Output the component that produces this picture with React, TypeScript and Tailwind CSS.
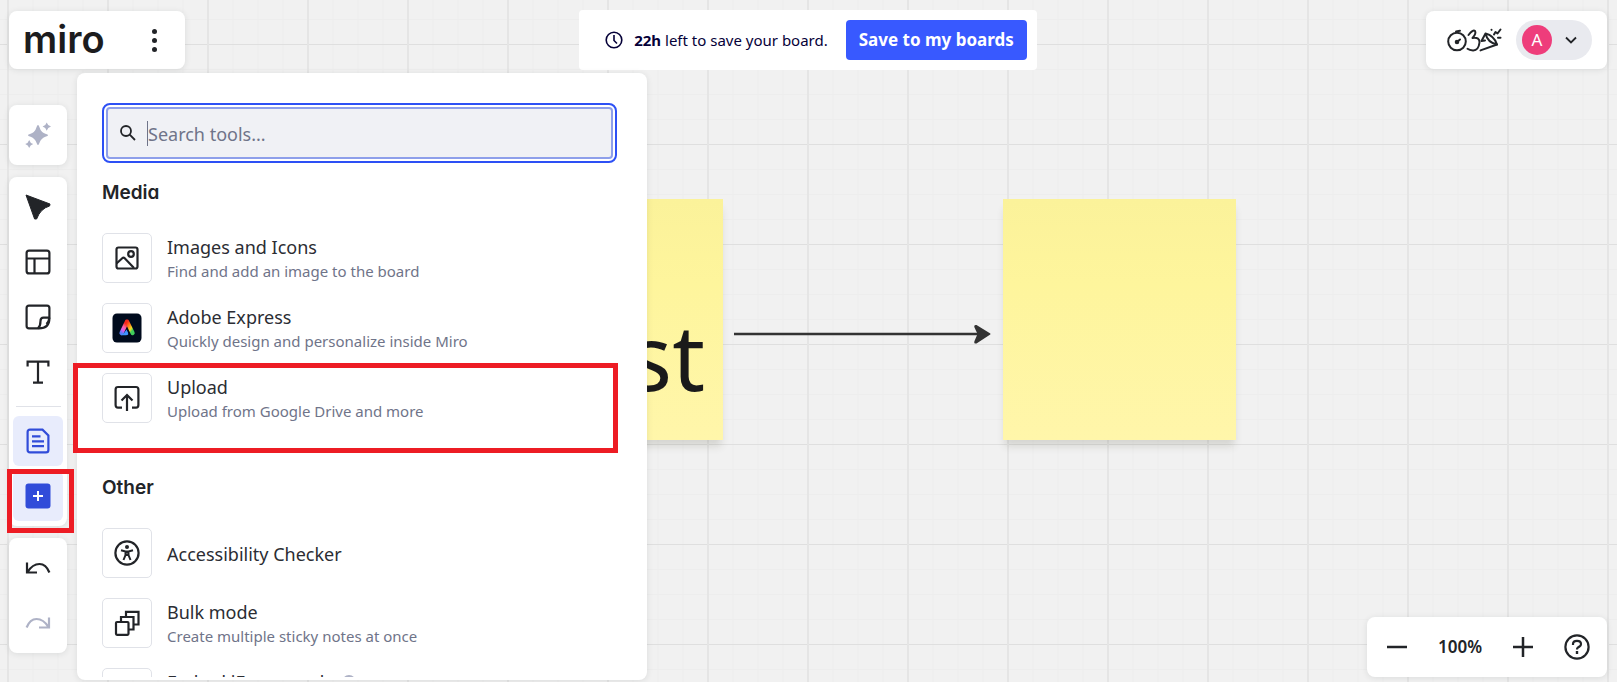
import React, { useState } from "react";

const tileButton = "flex size-[50px] items-center justify-center rounded-md";
const card = "rounded-lg bg-white shadow-[0_1px_6px_rgba(34,36,40,0.10)]";

interface IconProps {
    size?: number;
    children: React.ReactNode;
}

// 26x26 stroke icon used all over the toolbars
function Icon({ size = 26, children }: IconProps) {
    return (
        <svg
            width={size}
            height={size}
            viewBox="0 0 26 26"
            fill="none"
            stroke="currentColor"
            strokeWidth="2.2"
            aria-hidden="true"
        >
            {children}
        </svg>
    );
}

const SparkleIcon = () => (
    <Icon>
        <g fill="currentColor" stroke="none">
            <path d="M13 3 Q13.8 3 14.4 5 Q16 10.600 21 12 Q23 12.600 23 13.300 Q23 14 21 14.500 Q16 16 14.400 21 Q13.800 23 13 23 Q12.200 23 11.600 21 Q10 16 5 14.500 Q3 14 3 13.300 Q3 12.600 5 12 Q10 10.600 11.600 5 Q12.200 3 13 3Z" />
            <path d="M21.700 0.500 Q22.600 3.700 26 4.600 Q22.600 5.500 21.700 8.700 Q20.800 5.500 17.600 4.600 Q20.800 3.700 21.700 0.500Z" />
            <path d="M4.200 18 Q5.100 21.100 8.200 22 Q5.100 22.900 4.200 26 Q3.300 22.900 0.200 22 Q3.300 21.100 4.200 18Z" />
        </g>
    </Icon>
);

const CursorIcon = () => (
    <Icon>
        <path d="M1 1 L25 10 L24.600 12 Q15.500 14.500 11.600 25 L9.600 25 Z" fill="currentColor" stroke="currentColor" strokeWidth="1" strokeLinejoin="round" />
    </Icon>
);

const TemplateIcon = () => (
    <Icon>
        <rect x="1.600" y="1.600" width="22.800" height="22.800" rx="2.500" />
        <path d="M1.600 9.500H24.400M9.500 9.500V24.400" />
    </Icon>
);

const StickyIcon = () => (
    <Icon>
        <path d="M4 1.600H22Q24.400 1.600 24.400 4V14Q24.400 24.400 14 24.400H4Q1.600 24.400 1.600 22V4Q1.600 1.600 4 1.600Z" />
        <path d="M24.400 13.600H18.500Q15.500 13.600 15.500 17Q15.500 22 13 24.400M21.500 20Q24 17.500 24.400 13.600" />
    </Icon>
);

const TextIcon = () => (
    <Icon>
        <path d="M2.600 7.500V2.600H23.400V7.500M13 2.600V23.400M8 23.600H18" />
    </Icon>
);

const DocIcon = () => (
    <Icon>
        <path d="M5 1.600H17.500L23.400 7.500V22Q23.400 24.400 21 24.400H5Q2.600 24.400 2.600 22V4Q2.600 1.600 5 1.600Z" />
        <path d="M7 8.300H15.500M7 13.300H19M7 18.200H19" />
    </Icon>
);

const AddIcon = () => (
    <Icon>
        <rect x="0.500" y="0.500" width="25" height="25" rx="3" fill="currentColor" stroke="none" />
        <path d="M13 8V18M8 13H18" stroke="#fff" strokeWidth="2" />
    </Icon>
);

const UndoIcon = () => (
    <Icon>
        <path d="M2 7.500V17.500H12M2.600 17Q7.500 9 14.500 9Q21 9 24.400 17.500" />
    </Icon>
);

const RedoIcon = () => (
    <Icon>
        <path d="M24 7.500V17.500H14M23.400 17Q18.500 9 11.500 9Q5 9 1.600 17.500" />
    </Icon>
);

const ImageIcon = () => (
    <Icon>
        <rect x="2.500" y="2.500" width="21" height="21" rx="2" />
        <circle cx="17" cy="9" r="2.800" />
        <path d="M2.500 18.500L8.500 13Q9.500 12.300 10.500 13L20 23" />
    </Icon>
);

const AdobeExpressIcon = () => (
    <svg width="30" height="30" viewBox="0 0 30 30" aria-hidden="true">
        <defs>
            <linearGradient id="expressLeft" x1="0" y1="1" x2="0.400" y2="0">
                <stop offset="0" stopColor="#5b7dfb" />
                <stop offset="0.300" stopColor="#d95df0" />
                <stop offset="0.650" stopColor="#ff5f9a" />
                <stop offset="1" stopColor="#f5261b" />
            </linearGradient>
            <linearGradient id="expressRight" x1="0" y1="0" x2="0.600" y2="1">
                <stop offset="0" stopColor="#f5261b" />
                <stop offset="0.500" stopColor="#ff9a1c" />
                <stop offset="0.750" stopColor="#f4df26" />
                <stop offset="1" stopColor="#3fce5c" />
            </linearGradient>
        </defs>
        <rect x="0.500" y="0.500" width="29" height="29" rx="4.500" fill="#000b1d" />
        <path d="M9.500 20L14.800 8.800" stroke="url(#expressLeft)" strokeWidth="4.200" strokeLinecap="round" />
        <path d="M15.200 8.800L20.600 20" stroke="url(#expressRight)" strokeWidth="4.200" strokeLinecap="round" />
        <path d="M8.500 22Q12 22.500 15.500 22Q16.800 21.500 16 19.500L14.500 16.500L12 20Z" fill="#3f93ff" />
    </svg>
);

const UploadIcon = () => (
    <Icon>
        <path d="M8 22.600H4Q1.600 22.600 1.600 20V4.500Q1.600 2 4 2H22Q24.400 2 24.400 4.500V20Q24.400 22.600 22 22.600H18" />
        <path d="M13 26V11M7.500 15.500L13 10L18.500 15.500" />
    </Icon>
);

const AccessibilityIcon = () => (
    <Icon>
        <circle cx="13" cy="13" r="11.600" />
        <circle cx="13" cy="7" r="2" fill="currentColor" stroke="none" />
        <path d="M7 10.200L11.500 11.500H14.500L19 10.200M11.500 11V15L9.500 20M14.500 11V15L16.500 20M11.500 12.500H14.500M11.500 15H14.500" strokeWidth="2" />
    </Icon>
);

const BulkIcon = () => (
    <Icon>
        <rect x="2" y="12" width="12.500" height="12.800" rx="1" />
        <path d="M7 12V7H19.500V19.500H14.500M12 7V1.800H24.500V14.500H19.500" />
    </Icon>
);

const HelpIcon = () => (
    <Icon>
        <circle cx="13" cy="13" r="11.600" />
        <path d="M9 11V10Q9 6.800 13 6.800Q17 6.800 17 10Q17 11.600 15.500 12.500L13.800 13.700Q13 14.300 13 15.600" />
        <path d="M11.800 18.500H14.200" strokeWidth="3" />
    </Icon>
);

// Timer, hand and confetti doodles
const FacilitationIcon = () => (
    <svg width="56" height="26" viewBox="0 0 56 26" fill="none" stroke="#222428" strokeWidth="2" strokeLinecap="round" strokeLinejoin="round" aria-hidden="true">
        <circle cx="10" cy="14.500" r="8.800" />
        <path d="M9 4.600L13 3.800M10 15L13 12.500" />
        <circle cx="10" cy="15" r="1.300" fill="#222428" />
        <path d="M21.500 8Q26 2.300 28 4Q29.500 6.500 25.500 11Q33 10 32.500 15.500Q31.500 23.600 26 23.400Q22.500 23.200 20.500 21.800" />
        <path d="M33.500 23.400L50 17.500" />
        <path d="M38.500 6.500Q47 8.500 50 17.500Q40.500 15.500 38.500 6.500ZM38.500 6.500L34.500 14L38 13.500" />
        <path d="M44.500 2.800L44.600 2.900M47 7.500L48.500 5L50.500 6.500L53.500 2.500M51 10.800H53.500" />
    </svg>
);

interface Tool {
    title: string;
    note?: string;
    icon?: React.ReactNode;
    highlighted?: boolean;
    info?: boolean;
}

const sections: { name: string; tools: Tool[] }[] = [
    {
        name: "Media",
        tools: [
            { title: "Images and Icons", note: "Find and add an image to the board", icon: <ImageIcon /> },
            { title: "Adobe Express", note: "Quickly design and personalize inside Miro", icon: <AdobeExpressIcon /> },
            { title: "Upload", note: "Upload from Google Drive and more", icon: <UploadIcon />, highlighted: true },
        ],
    },
    {
        name: "Other",
        tools: [
            { title: "Accessibility Checker", icon: <AccessibilityIcon /> },
            { title: "Bulk mode", note: "Create multiple sticky notes at once", icon: <BulkIcon /> },
            { title: "Embed iFrame code", note: "Embed content from the web", info: true },
        ],
    },
];

function ToolRow({ tool }: { tool: Tool }) {
    return (
        <li className="relative">
            <button className="flex w-full items-center gap-[15px] text-left">
                <span className="flex size-[50px] shrink-0 items-center justify-center rounded-[5px] border border-[#e0e2e8]">
                    {tool.icon}
                </span>
                <span className="flex flex-col pt-0.5">
                    <span className="flex items-center gap-2 text-lg leading-6 text-[#2b2d33]">
                        {tool.title}
                        {tool.info && <span className="size-[14px] rounded-full border-2 border-[#aeb2c6]" />}
                    </span>
                    {tool.note && <span className="text-[15px] leading-6 text-[#6f7489]">{tool.note}</span>}
                </span>
            </button>
            {tool.highlighted && (
                <span className="pointer-events-none absolute -top-[10px] -right-[1px] -bottom-[30px] -left-[29px] border-5 border-[#ed1c24]" />
            )}
        </li>
    );
}

function ToolsPanel() {
    const [query, setQuery] = useState<string>("");

    return (
        <section className={`${card} flex w-[570px] flex-col pt-[30px] pr-[30px] pb-[3px] pl-[25px]`}>
            <div className="rounded-[8px] border-2 border-[#2d50f5] p-[2px]">
                <label className="flex h-[52px] items-center rounded-[4px] border-2 border-[#8e9fea] bg-[#f0f1f5] pl-[11px]">
                    <svg width="18" height="18" viewBox="0 0 18 18" fill="none" stroke="currentColor" strokeWidth="1.800" aria-hidden="true">
                        <circle cx="7" cy="7" r="5" />
                        <path d="M10.700 10.700L16 16" />
                    </svg>
                    <span className="ml-[10px] h-[25px] w-px bg-[#6f7489]" />
                    <input
                        type="text"
                        aria-label="Search tools"
                        className="min-w-0 flex-1 bg-transparent pt-0.5 text-lg placeholder:text-[#6f7489] focus:outline-none"
                        placeholder="Search tools..."
                        value={query}
                        onChange={(e) => setQuery(e.target.value)}
                    />
                </label>
            </div>

            <div className="flex min-h-0 flex-1 flex-col gap-[35px] overflow-y-clip">
                {sections.map((section) => (
                    <div key={section.name}>
                        <h2 className="mb-[10px] h-[60px] font-[Inter,sans-serif] text-[19px] leading-[60px] font-semibold [font-feature-settings:'cv11']">
                            {section.name}
                        </h2>
                        <ul className="flex flex-col gap-5">
                            {section.tools.map((tool) => (
                                <ToolRow key={tool.title} tool={tool} />
                            ))}
                        </ul>
                    </div>
                ))}
            </div>
        </section>
    );
}

function Toolbar() {
    return (
        <nav className="flex w-[58px] shrink-0 flex-col gap-3 pt-8">
            <div className={`${card} flex h-[60px] items-center justify-center text-[#aeb2c6]`}>
                <button aria-label="Create with AI" className={tileButton}><SparkleIcon /></button>
            </div>
            <div className={`${card} flex flex-col items-center gap-[5px] py-[5px]`}>
                <button aria-label="Select" className={tileButton}><CursorIcon /></button>
                <button aria-label="Templates" className={tileButton}><TemplateIcon /></button>
                <button aria-label="Sticky note" className={tileButton}><StickyIcon /></button>
                <button aria-label="Text" className={tileButton}><TextIcon /></button>
                <hr className="my-1 w-[45px] border-[#e0e2e8]" />
                <button aria-label="Docs" className={`${tileButton} bg-[#e8ecfc] text-[#314cd9]`}><DocIcon /></button>
                <button aria-label="More tools" className={`${tileButton} relative bg-[#e8ecfc] text-[#314cd9]`}>
                    <AddIcon />
                    <span className="pointer-events-none absolute -top-[2px] -right-[11px] -bottom-[12px] -left-[6px] border-5 border-[#ed1c24]" />
                </button>
            </div>
            <div className={`${card} flex flex-col items-center gap-[5px] py-[5px]`}>
                <button aria-label="Undo" className={tileButton}><UndoIcon /></button>
                <button aria-label="Redo" className={`${tileButton} text-[#aeb2c6]`}><RedoIcon /></button>
            </div>
        </nav>
    );
}

function Header() {
    return (
        <header className="grid grid-cols-[1fr_auto_1fr] items-center">
            <div className={`${card} flex h-[58px] w-44 items-center justify-between pr-[21px] pl-[14px]`}>
                <a href="#" className="pb-0.5 font-[Inter,sans-serif] text-[38px] leading-[44px] font-semibold text-[#1c1c1e]">miro</a>
                <button aria-label="Board menu" className="flex h-9 w-5 flex-col items-center justify-center gap-1">
                    <span className="size-[5px] rounded-full bg-[#222428]" />
                    <span className="size-[5px] rounded-full bg-[#222428]" />
                    <span className="size-[5px] rounded-full bg-[#222428]" />
                </button>
            </div>

            <div className="flex h-[60px] items-center rounded-[4px] bg-white pr-[10px] pl-[26px] text-[#050038]">
                <svg width="18" height="18" viewBox="0 0 18 18" fill="none" stroke="currentColor" strokeWidth="1.600" aria-hidden="true">
                    <circle cx="9" cy="9" r="7.800" />
                    <path d="M9 4V9.500L12 12.500" />
                </svg>
                <p className="ml-[11px] text-[15px]"><b>22h</b> left to save your board.</p>
                <button className="ml-[18px] h-10 rounded-[4px] bg-[#3859ff] px-[13px] text-[17px] font-bold text-white">
                    Save to my boards
                </button>
            </div>

            <div className={`${card} flex h-[58px] items-center justify-self-end pr-[15px] pl-[21px]`}>
                <button aria-label="Facilitation tools"><FacilitationIcon /></button>
                <button aria-label="Account" className="ml-[13px] flex h-10 w-[76px] items-center gap-[13px] rounded-full bg-[#e9eaef] pl-[6px]">
                    <span className="flex size-[30px] items-center justify-center rounded-full bg-[#ee3d7b] text-[17px] text-white">A</span>
                    <svg width="12" height="8" viewBox="0 0 12 8" fill="none" stroke="currentColor" strokeWidth="1.800" aria-hidden="true">
                        <path d="M1 1.500L6 6.500L11 1.500" />
                    </svg>
                </button>
            </div>
        </header>
    );
}

function ZoomControls() {
    return (
        <div className={`${card} mb-[3px] ml-auto flex h-[60px] w-60 items-center justify-between self-end pr-[17px] pl-5`}>
            <button aria-label="Zoom out">
                <svg width="20" height="20" viewBox="0 0 20 20" stroke="currentColor" strokeWidth="2.500"><path d="M0 10H20" /></svg>
            </button>
            <span className="text-[17px] font-semibold">100%</span>
            <button aria-label="Zoom in">
                <svg width="20" height="20" viewBox="0 0 20 20" stroke="currentColor" strokeWidth="2.500"><path d="M0 10H20M10 0V20" /></svg>
            </button>
            <button aria-label="Help"><HelpIcon /></button>
        </div>
    );
}

const note =
    "absolute top-[199px] h-[241px] w-[233px] bg-linear-to-b from-[#fbf29a] via-[#fef59c] via-35% to-[#fff6aa] shadow-[0_8px_8px_-2px_rgba(60,64,40,0.16)]";

function Board() {
    return (
        <div className="absolute inset-0">
            <svg className="absolute size-full" aria-hidden="true">
                <defs>
                    <pattern id="grid" x="7" y="44" width="100" height="100" patternUnits="userSpaceOnUse">
                        <path d="M26 0V100M51 0V100M76 0V100M0 25.500H100M0 50.500H100M0 75.500H100" stroke="#ededed" strokeWidth="1" />
                        <path d="M0 0.500H100" stroke="#dfdfdf" strokeWidth="1" />
                        <path d="M1 0V100" stroke="#e5e5e5" strokeWidth="2" />
                    </pattern>
                </defs>
                <rect width="100%" height="100%" fill="url(#grid)" />
            </svg>
            <div className={`${note} left-[490px] flex items-end justify-end pr-[18px] pb-9`}>
                <span className="text-[91px] leading-[96px] text-[#1a1a1a]">Test</span>
            </div>
            <div className={`${note} left-[1003px]`} />
            <svg className="absolute top-[322px] left-[734px]" width="258" height="24" viewBox="0 0 258 24" aria-hidden="true">
                <path d="M0 12H246" stroke="#333" strokeWidth="2.600" />
                <path d="M242.500 3L255.500 11Q257.500 12 255.500 13L242.500 21.500Q239.500 22 240.500 19L243.500 12L240.500 5.500Q239.500 2.500 242.500 3Z" fill="#333" />
            </svg>
        </div>
    );
}

export default function App() {
    return (
        <main className="relative h-screen overflow-hidden bg-[#f1f1f1] font-['Noto_Sans',sans-serif] text-[#222428]">
            <Board />
            <div className="relative flex h-full flex-col gap-[3px] pt-[10px] pr-[10px] pb-[2px] pl-[9px]">
                <Header />
                <div className="flex min-h-0 flex-1 gap-[10px]">
                    <Toolbar />
                    <ToolsPanel />
                    <ZoomControls />
                </div>
            </div>
        </main>
    );
}
